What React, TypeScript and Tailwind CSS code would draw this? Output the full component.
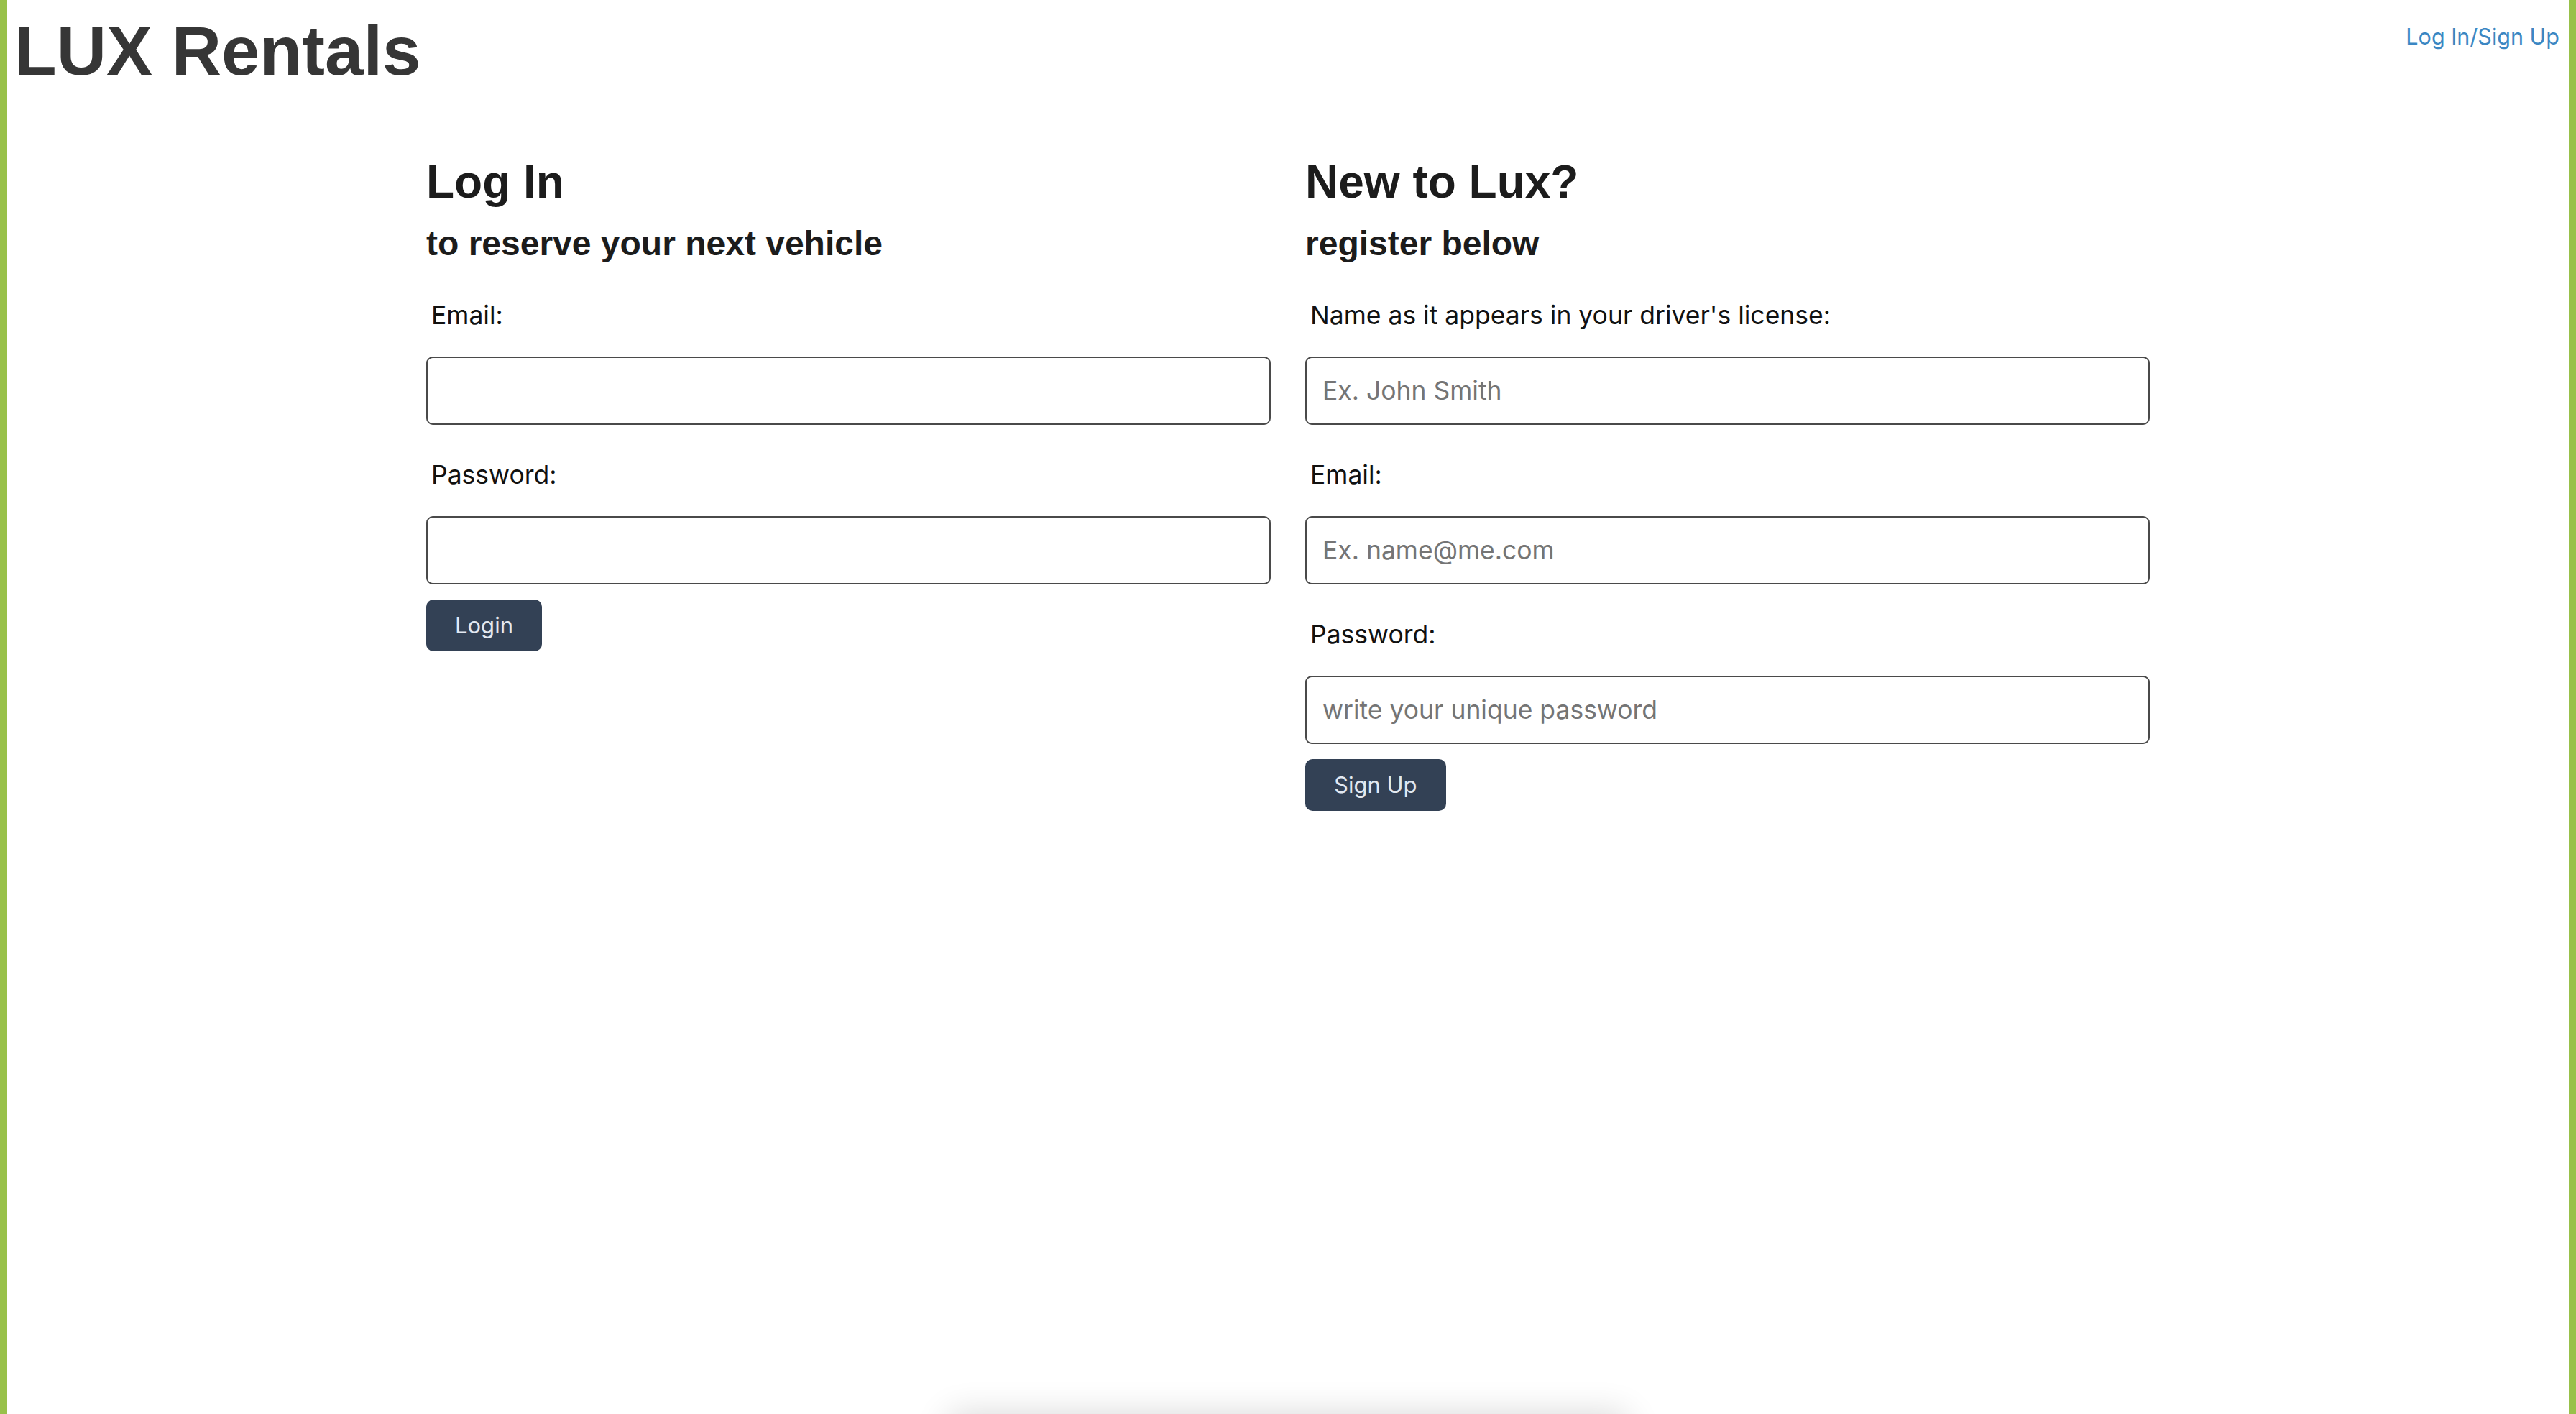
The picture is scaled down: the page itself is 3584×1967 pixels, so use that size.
import React from 'react';

const sans = "font-['Inter','Noto_Sans',sans-serif]";
const helv = "font-['Liberation_Sans','Arial',sans-serif]";

const Field: React.FC<{ label: string; placeholder?: string; type?: string; first?: boolean }> = ({
  label,
  placeholder,
  type = 'text',
  first,
}) => (
  <div className={first ? 'mt-[46px]' : 'mt-[43px]'}>
    <label className={`block pl-[7px] text-[35.5px] leading-[54px] text-[#111] ${sans}`}>{label}</label>
    <input
      type={type}
      placeholder={placeholder}
      className={`mt-[30px] block h-[95px] w-full rounded-[9px] border-2 border-[#4a4a4a] bg-white px-[22px] text-[35.5px] text-[#222] outline-none placeholder:text-[#757575] ${sans}`}
    />
  </div>
);

const Column: React.FC<{ title: string; subtitle: string; children: React.ReactNode }> = ({
  title,
  subtitle,
  children,
}) => (
  <div className="flex flex-col items-start">
    <h1 className={`text-[64px] font-bold leading-[1.15] text-[#1c1c1c] ${helv}`}>{title}</h1>
    <h2 className={`mt-[20px] text-[48px] font-bold leading-[1.15] text-[#1c1c1c] ${helv}`}>{subtitle}</h2>
    <div className="w-full">{children}</div>
  </div>
);

const Button: React.FC<{ children: React.ReactNode }> = ({ children }) => (
  <button
    className={`mt-[21px] h-[72px] rounded-[10px] bg-[#334155] px-[40px] text-[31px] leading-[48px] text-[#e2e8f0] ${sans}`}
  >
    {children}
  </button>
);

export default function App() {
  return (
    <div className="h-screen overflow-hidden bg-white">
      <div className="min-h-screen border-x-[10px] border-[#98c14a] bg-white">
        {/* top bar */}
        <header className="flex items-start justify-between pl-[10px] pr-[13px]">
          <div className={`mt-[16px] text-[96px] font-bold leading-[110px] text-[#363636] ${helv}`}>LUX Rentals</div>
          <a href="#" className={`mt-[27px] text-[30.5px] leading-[48px] text-[#3b87c3] ${sans}`}>
            Log In/Sign Up
          </a>
        </header>

        <main className="mx-auto mt-[-35px] grid w-[2398px] grid-cols-2 gap-[48px] pt-[126px]">
          <Column title="Log In" subtitle="to reserve your next vehicle">
            <Field label="Email:" type="email" first />
            <Field label="Password:" type="password" />
            <Button>Login</Button>
          </Column>

          <Column title="New to Lux?" subtitle="register below">
            <Field label="Name as it appears in your driver's license:" placeholder="Ex. John Smith" first />
            <Field label="Email:" placeholder="Ex. name@me.com" type="email" />
            <Field label="Password:" placeholder="write your unique password" type="password" />
            <Button>Sign Up</Button>
          </Column>
        </main>
      </div>

      {/* card sitting just below the fold */}
      <div className="mx-auto h-[300px] w-[944px] rounded-xl bg-white shadow-[0_0_48px_rgba(0,0,0,0.16)]" />
    </div>
  );
}
